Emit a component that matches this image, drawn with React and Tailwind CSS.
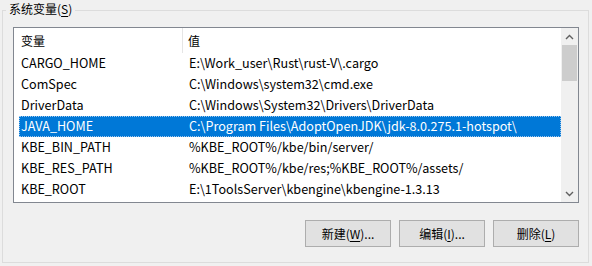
import React from "react";

const rows = [
  ["CARGO_HOME", "E:\\Work_user\\Rust\\rust-V\\.cargo"],
  ["ComSpec", "C:\\Windows\\system32\\cmd.exe"],
  ["DriverData", "C:\\Windows\\System32\\Drivers\\DriverData"],
  ["JAVA_HOME", "C:\\Program Files\\AdoptOpenJDK\\jdk-8.0.275.1-hotspot\\"],
  ["KBE_BIN_PATH", "%KBE_ROOT%/kbe/bin/server/"],
  ["KBE_RES_PATH", "%KBE_ROOT%/kbe/res;%KBE_ROOT%/assets/"],
  ["KBE_ROOT", "E:\\1ToolsServer\\kbengine\\kbengine-1.3.13"],
];

function Chevron({ down }) {
  return (
    <svg width="9" height="6" viewBox="0 0 9 6" className="block">
      <path
        d={down ? "M1 1 L4.5 4.5 L8 1" : "M1 5 L4.5 1.5 L8 5"}
        fill="none"
        stroke="#606060"
        strokeWidth="1.4"
      />
    </svg>
  );
}

function Btn({ label, hot, tail }) {
  return (
    <button className="w-[86px] h-[27px] bg-[#e1e1e1] border border-[#adadad] text-[12px] text-black flex items-center justify-center">
      {label}(<span className="underline underline-offset-2">{hot}</span>){tail}
    </button>
  );
}

export default function App() {
  return (
    <div
      className="w-[592px] h-[266px] bg-[#f0f0f0] relative overflow-hidden text-black"
      style={{ fontFamily: '"Segoe UI", "Noto Sans CJK SC", sans-serif' }}
    >
      {/* group box frame */}
      <div className="absolute left-[2px] top-[10px] w-[587px] h-[253px] border border-[#dcdcdc]" />
      <div className="absolute left-[6px] top-0 px-[3px] bg-[#f0f0f0] text-[12px] leading-[17px]">
        系统变量(<span className="underline underline-offset-2">S</span>)
      </div>

      <div className="relative pt-[27px] pl-[13px]">
        <div className="w-[566px] h-[176px] border border-[#828790] bg-white flex">
          <div className="flex-1 flex flex-col text-[12.6px]">
            <div className="h-[25px] flex items-center text-[12px]">
              <div className="w-[169px] h-full pl-[7px] flex items-center border-r border-[#e5e5e5]">变量</div>
              <div className="pl-[5px]">值</div>
            </div>
            {rows.map(([k, v]) => {
              const sel = k === "JAVA_HOME";
              return (
                <div
                  key={k}
                  className={`h-[21px] flex items-center ml-[5px] ${
                    sel ? "bg-[#0078d7] text-white outline outline-1 outline-dotted outline-[#9dc6ec] -outline-offset-1" : ""
                  }`}
                >
                  <div className="w-[170px] pl-[2px] whitespace-nowrap">{k}</div>
                  <div className="whitespace-nowrap">{v}</div>
                </div>
              );
            })}
          </div>
          <div className="w-[17px] bg-[#f0f0f0] flex flex-col items-center">
            <div className="h-[17px] flex items-center justify-center">
              <Chevron />
            </div>
            <div className="w-[15px] h-[36px] bg-[#cdcdcd]" />
            <div className="flex-1" />
            <div className="h-[17px] flex items-center justify-center">
              <Chevron down />
            </div>
          </div>
        </div>
      </div>

      <div className="relative flex justify-end gap-[8px] pr-[13px] mt-[17px]">
        <Btn label="新建" hot="W" tail="..." />
        <Btn label="编辑" hot="I" tail="..." />
        <Btn label="删除" hot="L" tail="" />
      </div>
    </div>
  );
}
